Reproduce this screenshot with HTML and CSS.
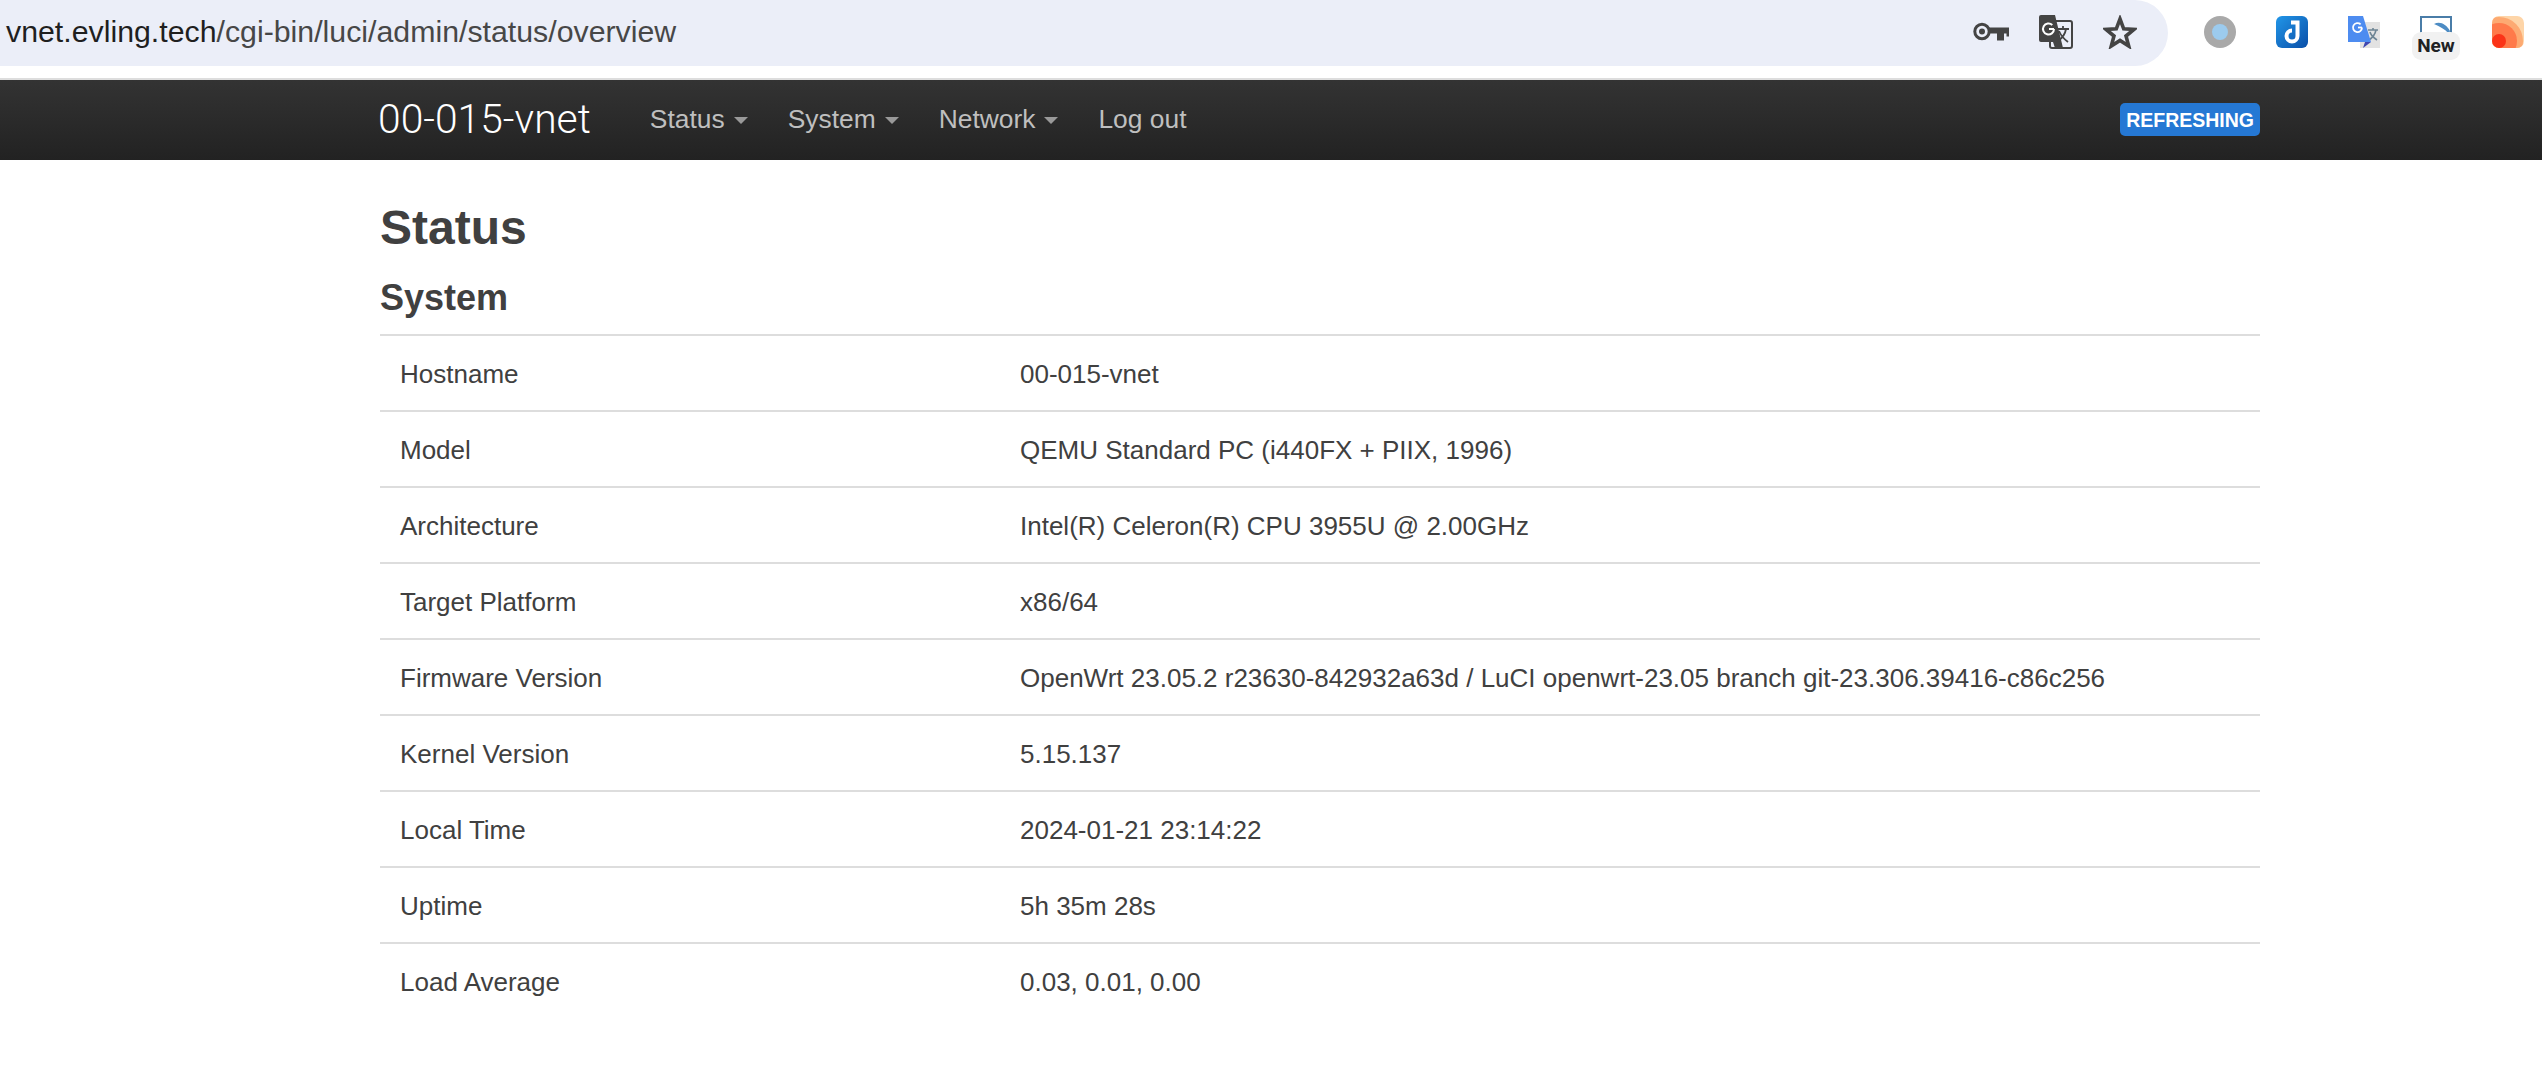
FILE: index.html
```html
<!DOCTYPE html>
<html lang="en">
<head>
<meta charset="utf-8">
<title>00-015-vnet - Status</title>
<link rel="stylesheet" href="styles.css">
</head>
<body>
<header class="toolbar">
  <div class="omnibox">
    <div class="url"><span class="host">vnet.evling.tech</span>/cgi-bin/luci/admin/status/overview</div>
    <div class="omni-icons">
      <svg class="ic-key" viewBox="0 0 36 20" width="36" height="20"><circle cx="9" cy="9.500" r="7.200" fill="none" stroke="#444" stroke-width="3"/><circle cx="9" cy="9.500" r="3" fill="#444"/><path d="M15 5.500h21v9h-2.500v-3H31v7h-7v-7h-9z" fill="#444"/></svg>
      <svg class="ic-trans" viewBox="0 0 34 34" width="34" height="34"><rect x="11" y="6" width="22" height="27" rx="2" fill="#ebeef8" stroke="#444" stroke-width="2"/><path d="M2 0h14l8 33h-8l-2-6H2a2 2 0 0 1-2-2V2a2 2 0 0 1 2-2z" fill="#444"/><path d="M15 14a5.500 5.500 0 1 1-1.700-4" fill="none" stroke="#fff" stroke-width="2"/><path d="M10 14h5" stroke="#fff" stroke-width="2"/><path d="M18 14h12M24 11v3M27 14c-1 6-5 10-8 12M20 16c2 5 5 8 9 11" fill="none" stroke="#444" stroke-width="1.800"/></svg>
      <svg class="ic-star" viewBox="0 0 34 34" width="34" height="34"><path d="M17 4l3.700 9.800 10.300.6-8 6.600 2.700 10-8.700-5.600-8.700 5.600 2.700-10-8-6.600 10.300-.6z" fill="none" stroke="#444" stroke-width="3.600"/></svg>
    </div>
  </div>
  <div class="extensions">
    <svg class="ext" viewBox="0 0 32 32" width="32" height="32"><circle cx="16" cy="16" r="16" fill="#a9a9a9"/><circle cx="16" cy="16" r="8" fill="#9ccbee"/></svg>
    <svg class="ext" viewBox="0 0 32 32" width="32" height="32"><defs><linearGradient id="jg" x1="0" y1="0" x2="1" y2="1"><stop offset="0" stop-color="#2196e8"/><stop offset="1" stop-color="#0a4fa8"/></linearGradient></defs><rect width="32" height="32" rx="6" fill="url(#jg)"/><path d="M15 6.500h6.500V20a5.500 5.500 0 1 1-5.500-5.500" fill="none" stroke="#fff" stroke-width="4"/></svg>
    <svg class="ext" viewBox="0 0 32 32" width="32" height="32"><rect x="12" y="6" width="20" height="26" fill="#e2e2e2"/><path d="M20 14h10M25 12v2M28 14c-1 5-4 8-7 10M22 16c1 4 4 6 7 8" fill="none" stroke="#6e8594" stroke-width="1.600"/><path d="M0 0h15l8 26H0z" fill="#4d8cf0"/><path d="M17 26h6l-8 6z" fill="#3e46b0"/><path d="M14 11.500a4.500 4.500 0 1 1-1.400-3.200" fill="none" stroke="#fff" stroke-width="1.800"/><path d="M10 11.500h4" stroke="#fff" stroke-width="1.800"/></svg>
    <div class="ext ext-new">
      <svg viewBox="0 0 32 32" width="32" height="32"><rect x="1" y="1" width="30" height="30" fill="#fff" stroke="#4a7da8" stroke-width="2"/><path d="M14 8c6-3 12 0 16 7l-1 3c-4-5-10-8-15-10z" fill="#4d8cc4"/></svg>
      <span class="new-badge">New</span>
    </div>
    <svg class="ext" viewBox="0 0 32 32" width="32" height="32"><defs><clipPath id="oc"><rect width="32" height="32" rx="7"/></clipPath></defs><g clip-path="url(#oc)"><rect width="32" height="32" fill="#fed5a8"/><circle cx="7" cy="25" r="24" fill="#fdaa72"/><circle cx="7" cy="25" r="18" fill="#ff7a4a"/><circle cx="7" cy="25" r="7" fill="#fb3418"/></g></svg>
  </div>
</header>
<nav class="navbar">
  <div class="container nav-inner">
    <a class="brand">00-015-vnet</a>
    <ul class="menu">
      <li class="menu-item">Status<i class="caret"></i></li>
      <li class="menu-item">System<i class="caret"></i></li>
      <li class="menu-item">Network<i class="caret"></i></li>
      <li class="menu-item">Log out</li>
    </ul>
    <span class="badge">REFRESHING</span>
  </div>
</nav>
<main class="container">
  <h1 class="page-title">Status</h1>
  <h2 class="section-title">System</h2>
  <table class="info">
    <tr><td class="key">Hostname</td><td>00-015-vnet</td></tr>
    <tr><td class="key">Model</td><td>QEMU Standard PC (i440FX + PIIX, 1996)</td></tr>
    <tr><td class="key">Architecture</td><td>Intel(R) Celeron(R) CPU 3955U @ 2.00GHz</td></tr>
    <tr><td class="key">Target Platform</td><td>x86/64</td></tr>
    <tr><td class="key">Firmware Version</td><td>OpenWrt 23.05.2 r23630-842932a63d / LuCI openwrt-23.05 branch git-23.306.39416-c86c256</td></tr>
    <tr><td class="key">Kernel Version</td><td>5.15.137</td></tr>
    <tr><td class="key">Local Time</td><td>2024-01-21 23:14:22</td></tr>
    <tr><td class="key">Uptime</td><td>5h 35m 28s</td></tr>
    <tr><td class="key">Load Average</td><td>0.03, 0.01, 0.00</td></tr>
  </table>
</main>
</body>
</html>
```

FILE: styles.css
```css
* { box-sizing: border-box; }
html, body { margin: 0; padding: 0; }
body {
  background: #fff;
  color: #404040;
  font-family: "Liberation Sans", Arial, sans-serif;
  overflow: hidden;
  height: 1068px;
}
.toolbar {
  height: 78px;
  display: flex;
  align-items: flex-start;
}
.omnibox {
  width: 2168px;
  height: 66px;
  background: #ebeef8;
  border-radius: 0 33px 33px 0;
  display: flex;
  align-items: center;
  padding: 0 31px 0 6px;
}
.url {
  flex: 1;
  font-size: 30.300px;
  color: #474747;
  white-space: nowrap;
  padding-bottom: 2px;
}
.host { color: #1f1f1f; }
.omni-icons {
  display: flex;
  align-items: center;
  gap: 30px;
  padding-bottom: 2px;
}
.extensions {
  display: flex;
  gap: 40px;
  padding: 16px 0 0 36px;
}
.ext { display: block; flex: none; }
.ext-new { position: relative; width: 32px; height: 32px; }
.new-badge {
  position: absolute;
  left: -8px;
  top: 16px;
  width: 48px;
  height: 28px;
  background: #f1f1f1;
  border-radius: 9px;
  color: #202124;
  font: 700 19px/28px "Roboto", "Liberation Sans", sans-serif;
  text-align: center;
}
.navbar {
  height: 82px;
  border-top: 2px solid #ddd;
  background: linear-gradient(#333, #222);
}
.container {
  width: 1880px;
  margin: 0 0 0 380px;
}
.nav-inner {
  height: 78px;
  display: flex;
  align-items: center;
}
.brand {
  color: #fff;
  font-family: "Roboto", "Liberation Sans", sans-serif;
  font-size: 40.800px;
  font-weight: 300;
  margin: 0 59px 0 -2px;
}
.menu {
  list-style: none;
  display: flex;
  gap: 40px;
  margin: 0;
  padding: 0;
  flex: 1;
}
.menu-item {
  color: #bfbfbf;
  font-size: 26.400px;
  display: flex;
  align-items: center;
}
.caret {
  width: 0;
  height: 0;
  margin: 2px 0 0 9px;
  border-left: 7px solid transparent;
  border-right: 7px solid transparent;
  border-top: 7px solid #999;
}
.badge {
  background: #2578d4;
  color: #fff;
  font-size: 19.500px;
  font-weight: 700;
  border-radius: 5px;
  padding: 0 6px;
  height: 33px;
  line-height: 35px;
}
.page-title {
  font-size: 48px;
  line-height: 56px;
  font-weight: 700;
  margin: 0;
  padding-top: 40px;
}
.section-title {
  font-size: 36px;
  line-height: 42px;
  font-weight: 700;
  margin: 0;
  padding: 21px 0 15px;
}
.info {
  width: 100%;
  border-collapse: collapse;
  table-layout: fixed;
  font-size: 26px;
}
.info td {
  height: 76px;
  border-top: 2px solid #ddd;
  padding: 2px 20px 0;
  vertical-align: middle;
}
.info .key { width: 620px; }
```
